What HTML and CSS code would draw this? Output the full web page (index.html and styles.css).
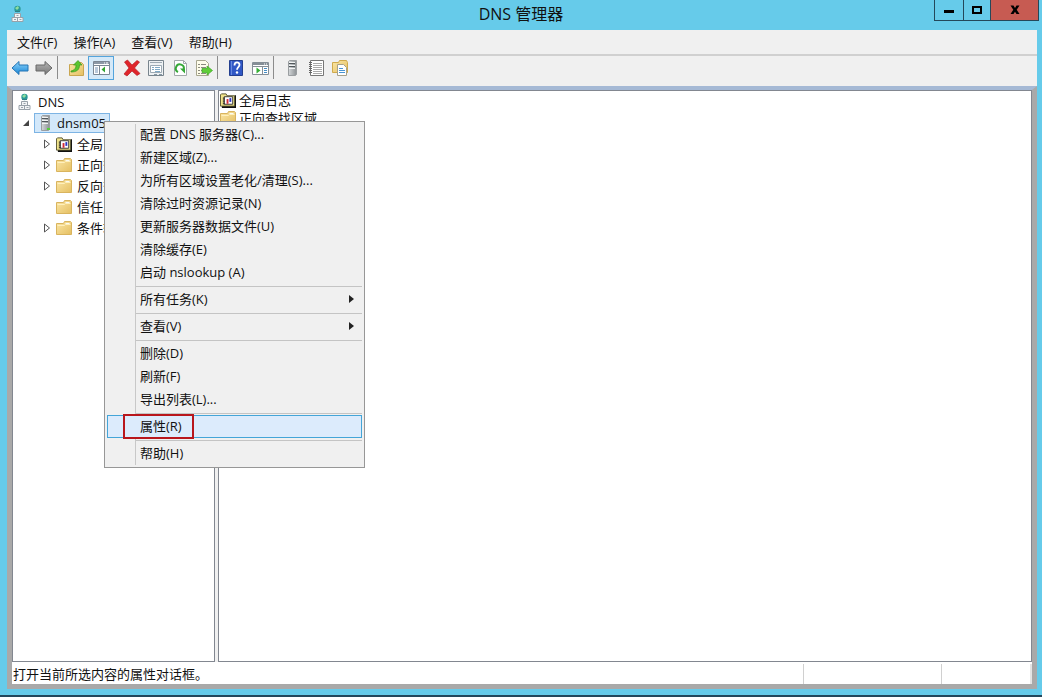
FILE: index.html
```html
<!DOCTYPE html>
<html lang="zh-CN">
<head>
<meta charset="utf-8">
<title>DNS 管理器</title>
<link rel="stylesheet" href="styles.css">
</head>
<body>
<svg class="defs" aria-hidden="true">
  <defs>
    <linearGradient id="gFolder" x1="0" y1="0" x2="1" y2="1"><stop offset="0" stop-color="#fbe7a6"/><stop offset="1" stop-color="#e5bf62"/></linearGradient>
    <linearGradient id="gBlue" x1="0" y1="0" x2="0" y2="1"><stop offset="0" stop-color="#8fd6fb"/><stop offset="1" stop-color="#1583d6"/></linearGradient>
    <linearGradient id="gGray" x1="0" y1="0" x2="0" y2="1"><stop offset="0" stop-color="#b5b5b5"/><stop offset="1" stop-color="#777"/></linearGradient>
    <linearGradient id="gServer" x1="0" y1="0" x2="1" y2="0"><stop offset="0" stop-color="#d5d8da"/><stop offset="1" stop-color="#8c9194"/></linearGradient>
  </defs>
  <symbol id="dns" viewBox="0 0 16 18">
    <circle cx="7.500" cy="4" r="3.200" fill="#2a9a98"/><path d="M5 3l3-2 1 2-2 2z" fill="#8fdf9f"/><path d="M5 6.500h5" stroke="#2f7f86"/>
    <path d="M4.500 8.500h6v4h-6zM2 12.500h5.500v4H2zM7.500 12.500H13v4H7.500z" fill="#f2f4f6" stroke="#98a1a9"/>
    <path d="M6.500 10.500h2M4 14.500h2M9.500 14.500h2" stroke="#98a3ab"/>
  </symbol>
  <symbol id="folder" viewBox="0 0 16 16">
    <path d="M.5 14.500V3.500h7l1-2h6l1 1v12z" fill="url(#gFolder)" stroke="#d9b45e"/>
    <path d="M9.500 3.500h4" stroke="#f9fbf4"/><path d="M1.500 5.500h7l1-1h5" fill="none" stroke="#fff0bd"/>
  </symbol>
  <symbol id="log" viewBox="0 0 17 16">
    <path d="M2 15.500h14.500V3" fill="none" stroke="#111" stroke-width="2"/>
    <path d="M.5 14.500v-12l1-1h5l1 2h8v11z" fill="#f1e48b" stroke="#55522e"/>
    <path d="M4.500 4.500h9v8h-9z" fill="#fff" stroke="#333"/>
    <path d="M3 6h2M3 8h2M3 10h2M3 12h2" stroke="#111"/>
    <path d="M8 7v5" stroke="#d32a37" stroke-width="2"/><path d="M11 6v4" stroke="#2b35c4" stroke-width="2"/>
  </symbol>
  <symbol id="server" viewBox="0 0 16 18">
    <path d="M4.500 2.500l1-1h7v14l-1 1h-7z" fill="url(#gServer)" stroke="#9a9ea1"/>
    <path d="M5 4.500h6M5 7.500h6" stroke="#51585c"/><path d="M5 3.500h6M5 6.500h6M5 9.500h6" stroke="#f1f3f4"/>
  </symbol>
</svg>
<div class="window">
  <header class="titlebar">
    <svg class="app-icon"><use href="#dns"/></svg>
    <h1 class="title">DNS 管理器</h1>
    <div class="caption-buttons">
      <button class="caption" aria-label="最小化"><svg width="12" height="12"><path d="M1 7.500h10" stroke="#000" stroke-width="3"/></svg></button>
      <button class="caption caption-max" aria-label="最大化"><svg width="12" height="12"><path d="M2 3h8v6H2z" fill="none" stroke="#000" stroke-width="2"/></svg></button>
      <button class="caption caption-close" aria-label="关闭"><svg width="12" height="12"><path d="M1.500 1.500h3L6 4l1.500-2.500h3L7.700 5.800l2.800 4.200h-3L6 7.700 4.500 10h-3l2.800-4.200z"/></svg></button>
    </div>
  </header>
  <div class="client">
    <nav class="menubar">
      <button>文件(F)</button><button>操作(A)</button><button>查看(V)</button><button>帮助(H)</button>
    </nav>
    <div class="toolbar" role="toolbar" aria-label="工具栏">
      <button aria-label="后退"><svg viewBox="0 0 18 18"><path d="M1 9l7-6.500V6h9v6H8v3.500z" fill="url(#gBlue)" stroke="#2574b4"/></svg></button>
      <button aria-label="前进"><svg viewBox="0 0 18 18"><path d="M17 9l-7-6.500V6H1v6h9v3.500z" fill="url(#gGray)" stroke="#686868"/></svg></button>
      <span class="divider"></span>
      <button aria-label="向上一级"><svg viewBox="0 0 18 18"><path d="M2.500 16.500v-11h6l1-2h5l2 2v11z" fill="url(#gFolder)" stroke="#c9a650"/><path d="M4 12c4-1 5-3 5-6H6.500L11 1.500 15 6h-2.500c0 5-3 7-8.500 7z" fill="#5bc52e" stroke="#3c961f" stroke-width=".7"/></svg></button>
      <button class="active" aria-label="显示/隐藏控制台树"><svg viewBox="0 0 18 18"><path d="M1.500 2.500h16v13h-16z" fill="#fff" stroke="#7b8794"/><path d="M2 4h15" stroke="#8c98a6" stroke-width="2"/><path d="M2 6.500h15M7.500 7v8" stroke="#7b8794"/><path d="M3 9h3M3 11h3M3 13h3" stroke="#7492b4"/><path d="M13 7.500v6L9.500 10.500z" fill="#32a532"/><path d="M12 4h1M14 4h2" stroke="#fff"/></svg></button>
      <span class="spacer"></span>
      <button aria-label="删除"><svg viewBox="0 0 18 18"><path d="M1.500 3l3-2L9 6l5-4.500 2.500 1.500-5 6 5.500 5.500-3 2L9 12l-5 5-3-2 5-6z" fill="#e0252b" stroke="#b62026" stroke-width=".7"/></svg></button>
      <button aria-label="属性"><svg viewBox="0 0 18 18"><path d="M1.500 1.500h15v15h-15z" fill="#eef1f3" stroke="#78848d"/><path d="M3 3.500h12" stroke="#9faab3"/><path d="M3.500 6.500h11v7h-11z" fill="#fff" stroke="#9daab4"/><path d="M5 8.500h2M5 10.500h2M8 8.500h5M8 10.500h5M8 12.500h5" stroke="#7fa9c6"/><path d="M7 15.500h3M12 15.500h3" stroke="#8699a6"/></svg></button>
      <button aria-label="刷新"><svg viewBox="0 0 18 18"><path d="M3.500 1.500h9l3 3v12h-12z" fill="#fff" stroke="#a3a8ab"/><path d="M12.500 1.500v3h3" fill="none" stroke="#a3a8ab"/><path d="M7 13a4 4 0 1 1 5.700-2.500" fill="none" stroke="#36a837" stroke-width="2"/><path d="M9 9.500h5v5z" fill="#36a837"/></svg></button>
      <button aria-label="导出列表"><svg viewBox="0 0 18 18"><path d="M1.500 1.500h9l3 3v12h-12z" fill="#fffdeb" stroke="#a8a68f"/><path d="M3 5.500h2M6 5.500h5M3 8.500h2M6 8.500h5M3 11.500h2M6 11.500h4M3 14.500h2M6 14.500h5" stroke="#8c8b80"/><path d="M7 9.500h5V7l5.500 4.500L12 16v-2.500H7z" fill="#60cd38" stroke="#3dab25" stroke-width=".7"/></svg></button>
      <span class="divider"></span>
      <button aria-label="帮助"><svg viewBox="0 0 18 18"><path d="M2.500 1.500h13v15h-13z" fill="#3158c6" stroke="#243f8f"/><path d="M4.500 2v14" stroke="#6789df"/><path d="M7.500 6.500c0-4 5-4 5-.7 0 2.300-2.500 2.300-2.500 5" fill="none" stroke="#fff" stroke-width="1.800"/><circle cx="10" cy="13.500" r="1.200" fill="#fff"/></svg></button>
      <button aria-label="显示/隐藏操作窗格"><svg viewBox="0 0 18 18"><path d="M1.500 3.500h16v12h-16z" fill="#fff" stroke="#858e96"/><path d="M2 5h15" stroke="#858e96" stroke-width="2"/><path d="M2 7.500h15M11.500 8v7" stroke="#858e96"/><path d="M13 9.500h3M13 11.500h3M13 13.500h3" stroke="#468dc4"/><path d="M5.500 8.500v6L9.500 11.500z" fill="#35af35"/><path d="M13 5h1M15 5h1" stroke="#fff"/></svg></button>
      <span class="divider"></span>
      <button aria-label="服务器"><svg viewBox="0 0 16 18"><use href="#server"/></svg></button>
      <button aria-label="筛选记录"><svg viewBox="0 0 18 18"><path d="M3.500 1.500h13v15h-13z" fill="#fff" stroke="#777"/><path d="M6 4.500h9M6 6.500h9M6 8.500h9M6 10.500h9M6 12.500h9M6 14.500h9" stroke="#aaa"/><path d="M2 3.500h3M2 5.500h3M2 7.500h3M2 9.500h3M2 11.500h3M2 13.500h3" stroke="#666"/></svg></button>
      <button aria-label="新建区域"><svg viewBox="0 0 18 18"><path d="M1.500 13.500v-10h6l1-2h7l1 2v10z" fill="url(#gFolder)" stroke="#cfaa4c"/><path d="M6.500 5.500h6l3 3v8h-9z" fill="#fff" stroke="#a5a08b"/><path d="M8 9.500h4M8 11.500h6M8 13.500h6" stroke="#4994d3"/></svg></button>
    </div>
    <main class="workspace">
      <section class="pane tree-pane" aria-label="控制台树">
        <ul class="tree">
          <li class="node root"><svg class="icon tall"><use href="#dns"/></svg><span>DNS</span></li>
          <li class="node host"><svg class="twisty" viewBox="0 0 8 8"><path d="M1 7l6-6v6z" fill="#444"/></svg><span class="selected"><svg class="icon tall"><use href="#server"/><path d="M10 14h3v2h-3z" fill="#55d03d"/></svg><span>dnsm05</span></span></li>
          <li class="node child"><svg class="twisty" viewBox="0 0 8 10"><path d="M1.500 1v8l5-4z" fill="#fff" stroke="#555"/></svg><svg class="icon"><use href="#log"/></svg><span>全局日志</span></li>
          <li class="node child"><svg class="twisty" viewBox="0 0 8 10"><path d="M1.500 1v8l5-4z" fill="#fff" stroke="#555"/></svg><svg class="icon"><use href="#folder"/></svg><span>正向查找区域</span></li>
          <li class="node child"><svg class="twisty" viewBox="0 0 8 10"><path d="M1.500 1v8l5-4z" fill="#fff" stroke="#555"/></svg><svg class="icon"><use href="#folder"/></svg><span>反向查找区域</span></li>
          <li class="node child"><span class="twisty"></span><svg class="icon"><use href="#folder"/></svg><span>信任点</span></li>
          <li class="node child"><svg class="twisty" viewBox="0 0 8 10"><path d="M1.500 1v8l5-4z" fill="#fff" stroke="#555"/></svg><svg class="icon"><use href="#folder"/></svg><span>条件转发器</span></li>
        </ul>
      </section>
      <section class="pane list-pane" aria-label="内容">
        <ul class="list">
          <li><svg class="icon"><use href="#log"/></svg>全局日志</li>
          <li><svg class="icon"><use href="#folder"/></svg>正向查找区域</li>
        </ul>
      </section>
    </main>
    <footer class="statusbar"><span class="status-text">打开当前所选内容的属性对话框。</span><span class="status-cell"></span><span class="status-cell last"></span></footer>
  </div>
</div>
<div class="context-menu" role="menu">
  <button role="menuitem">配置 DNS 服务器(C)...</button>
  <button role="menuitem">新建区域(Z)...</button>
  <button role="menuitem">为所有区域设置老化/清理(S)...</button>
  <button role="menuitem">清除过时资源记录(N)</button>
  <button role="menuitem">更新服务器数据文件(U)</button>
  <button role="menuitem">清除缓存(E)</button>
  <button role="menuitem">启动 nslookup (A)</button>
  <hr>
  <button role="menuitem" class="submenu">所有任务(K)</button>
  <hr>
  <button role="menuitem" class="submenu">查看(V)</button>
  <hr>
  <button role="menuitem">删除(D)</button>
  <button role="menuitem">刷新(F)</button>
  <button role="menuitem">导出列表(L)...</button>
  <hr>
  <button role="menuitem" class="highlight">属性(R)<span class="marker"></span></button>
  <hr>
  <button role="menuitem">帮助(H)</button>
</div>
</body>
</html>
```

FILE: styles.css
```css
* { box-sizing: border-box; }
body {
  margin: 0;
  color: #111;
  font: 13px/20px "Open Sans", "Noto Sans CJK SC", sans-serif;
}
button {
  margin: 0;
  padding: 0;
  border: 0;
  background: none;
  color: inherit;
  font: inherit;
}
ul { margin: 0; padding: 0; list-style: none; }
svg { display: block; flex: none; }
.defs { position: absolute; width: 0; height: 0; }

.window {
  display: flex;
  flex-direction: column;
  height: 100vh;
  padding: 0 5px 6px 7px;
  background: #66cbea;
  border-bottom: 2px solid #23475c;
}
.titlebar {
  display: grid;
  grid-template-columns: 1fr auto 1fr;
  align-items: start;
  height: 30px;
  flex: none;
  margin-right: -2px;
}
.app-icon { width: 16px; height: 18px; margin: 5px 0 0 3px; }
.title { margin: 0; padding-right: 4px; font-size: 16px; line-height: 28px; font-weight: 400; }
.caption-buttons { display: flex; justify-self: end; height: 21px; border: 1px solid #24485a; border-top: 0; }
.caption { display: grid; place-items: center; width: 28px; }
.caption-max { width: 28px; border: solid #24485a; border-width: 0 1px; }
.caption-close { width: 47px; background: #c75b52; }

.client { display: flex; flex-direction: column; flex: 1; min-height: 0; background: #f0f0f0; }
.menubar { display: flex; gap: 16px; height: 26px; flex: none; padding: 1px 10px; border-bottom: 2px solid #d0d0d0; }
.toolbar { display: flex; height: 30px; flex: none; padding: 0 1px; }
.toolbar button { display: grid; place-items: center; width: 24px; height: 24px; }
.toolbar svg { width: 18px; height: 18px; }
.toolbar .active { width: 26px; border: 1px solid #54a4dc; background: #d5e9f8; }
.divider { width: 8px; height: 23px; }
.divider::before { content: ""; display: block; width: 1px; height: 100%; margin-left: 1px; background: #8c8c8c; }
.spacer { width: 6px; }

.workspace {
  display: flex;
  gap: 3px;
  flex: 1;
  min-height: 0;
  border: solid #a9a9a9;
  border-width: 4px 5px 0;
  border-top-color: #a5b9d5;
}
.pane { background: #fff; border: 1px solid #828790; overflow: hidden; }
.tree-pane { width: 203px; flex: none; }
.list-pane { flex: 1; }
.node { display: flex; align-items: center; height: 21px; white-space: nowrap; }
.icon { width: 16px; height: 16px; }
.icon.tall { height: 18px; }
.root { gap: 5px; padding-left: 4px; }
.host { padding-left: 9px; }
.twisty { width: 8px; height: 10px; }
.selected { display: flex; align-items: center; gap: 4px; height: 20px; margin-left: 4px; padding: 0 3px 0 2px; border: 1px solid #7db4e4; background: #d3e8fa; }
.child { gap: 5px; padding-left: 30px; }
.list li { display: flex; align-items: center; gap: 3px; height: 18px; padding-left: 1px; }

.statusbar {
  display: flex;
  height: 27px;
  flex: none;
  border: solid #a9a9a9;
  border-width: 0 5px 5px;
  padding-top: 2px;
  background: #fff;
}
.status-text { flex: 1; padding-left: 1px; }
.status-cell { width: 138px; border-left: 1px solid #d0d0d0; }
.status-cell.last { width: 91px; border-right: 2px solid #e4e4e4; }

.context-menu {
  position: absolute;
  left: 104px;
  top: 121px;
  display: flex;
  flex-direction: column;
  width: 261px;
  padding: 1px 2px 2px;
  border: 1px solid #979797;
  background: linear-gradient(#c8c8c8, #c8c8c8) 30px 2px / 1px calc(100% - 4px) no-repeat #f0f0f0;
}
.context-menu button { display: flex; align-items: center; height: 23px; padding: 0 8px 1px 33px; text-align: left; white-space: nowrap; }
.context-menu hr { width: 226px; height: 1px; margin: 2px 0 1px auto; border: 0; background: #c4c4c4; }
.context-menu .submenu::after {
  content: "";
  margin-left: auto;
  border: 4px solid transparent;
  border-left: 5px solid #222;
  border-right: 0;
}
.context-menu .highlight { position: relative; padding-left: 32px; border: 1px solid #44a5d8; background: #dcebfc; }
.marker { position: absolute; left: 15px; top: -2px; width: 71px; height: 25px; border: 2px solid #b8161c; }
```
